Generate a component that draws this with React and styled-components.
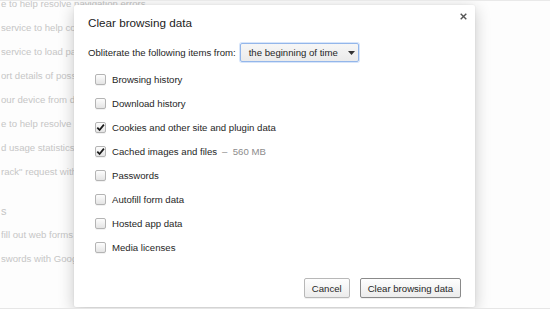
import React from "react";
import styled, { createGlobalStyle } from "styled-components";

const GlobalStyle = createGlobalStyle`
  html, body { margin: 0; padding: 0; background: #ffffff; }
  body { font-family: "Liberation Sans", Arial, Helvetica, sans-serif; }
  * { box-sizing: border-box; }
`;

const Page = styled.div`
  position: relative;
  width: 550px;
  height: 309px;
  overflow: hidden;
  background: #fdfdfd;
  border-top: 1px solid #e9e9e9;
  border-bottom: 1px solid #e6e6e6;
`;

const SettingsColumn = styled.div`
  display: flex;
  flex-direction: column;
  margin-top: -9px;
  padding-left: 1px;
  color: #c6c6c6;
  font-size: 9.6px;
  white-space: nowrap;
`;

const SettingLine = styled.div`
  width: ${(p) => p.$width || 73}px;
  height: 24px;
  line-height: 24px;
  overflow: hidden;
`;

const SectionHeading = styled.div`
  margin-top: 15px;
  height: 24px;
  line-height: 24px;
  font-size: 11px;
  color: #c4c4c4;
`;

const Dialog = styled.div`
  position: absolute;
  left: 74px;
  top: 4px;
  width: 401px;
  height: 302px;
  display: flex;
  flex-direction: column;
  background: #ffffff;
  border-radius: 2px;
  box-shadow: 0 4px 16px rgba(0, 0, 0, 0.22), 0 0 2px rgba(0, 0, 0, 0.08);
  color: #262626;
  font-size: 9.6px;
`;

const Header = styled.div`
  display: flex;
  justify-content: space-between;
  align-items: flex-start;
  padding: 10px 7px 0 14px;
`;

const Title = styled.h1`
  margin: 0;
  font-size: 11.7px;
  font-weight: normal;
  line-height: 15px;
  color: #222;
`;

const CloseButton = styled.button`
  display: flex;
  align-items: center;
  justify-content: center;
  width: 10px;
  height: 10px;
  margin-top: -4px;
  padding: 0;
  border: none;
  background: none;
  color: #555;
`;

const FromRow = styled.div`
  display: flex;
  align-items: center;
  gap: 4px;
  height: 19px;
  margin-top: 13px;
  padding-left: 14px;
`;

const Select = styled.div`
  display: flex;
  align-items: center;
  justify-content: space-between;
  width: 119px;
  height: 19px;
  padding: 0 3px 0 8px;
  border: 1px solid #93b6ea;
  border-radius: 2px;
  background: linear-gradient(#f6f6f6, #ebebeb);
  box-shadow: 0 0 0 1px rgba(140, 180, 240, 0.35);
  color: #262626;
`;

const CheckList = styled.div`
  display: flex;
  flex-direction: column;
  margin-top: 5px;
  padding-left: 21px;
`;

const CheckRow = styled.label`
  display: flex;
  align-items: center;
  gap: 6px;
  height: 24px;
`;

const Box = styled.span`
  display: flex;
  align-items: center;
  justify-content: center;
  width: 11px;
  height: 11px;
  border: 1px solid #b4b4b4;
  border-radius: 2px;
  background: linear-gradient(#fdfdfd, #e4e4e4);
  box-shadow: 0 1px 0 rgba(0, 0, 0, 0.05);
`;

const Detail = styled.span`
  margin-left: 5px;
  color: #8c8c8c;
`;

const Footer = styled.div`
  display: flex;
  justify-content: flex-end;
  gap: 10px;
  margin-top: auto;
  padding: 0 14px 9px;
`;

const Button = styled.button`
  height: 20px;
  padding: 0 7px;
  border: 1px solid ${(p) => (p.$primary ? "#8a8a8a" : "#b8b8b8")};
  border-radius: 2px;
  background: linear-gradient(#fefefe, #ececec);
  box-shadow: 0 1px 0 rgba(0, 0, 0, 0.06);
  font-family: "Liberation Sans", Arial, sans-serif;
  font-size: 9.6px;
  color: #262626;
`;

const backgroundLines = [
  "e to help resolve navigation errors",
  "service to help complete searches",
  "service to load pages more quickly",
  "ort details of possible security incidents",
  "our device from dangerous sites",
  "e to help resolve spelling errors",
  "d usage statistics and crash reports",
  "rack\" request with your browsing traffic",
];

const formLines = [
  "fill out web forms in a single click.",
  "swords with Google Smart Lock",
];

const items = [
  { label: "Browsing history", checked: false },
  { label: "Download history", checked: false },
  { label: "Cookies and other site and plugin data", checked: true },
  { label: "Cached images and files", checked: true, detail: "560 MB" },
  { label: "Passwords", checked: false },
  { label: "Autofill form data", checked: false },
  { label: "Hosted app data", checked: false },
  { label: "Media licenses", checked: false },
];

function CheckMark() {
  return (
    <svg width="9" height="9" viewBox="0 0 9 9">
      <path d="M1.3 4.6 L3.6 7 L7.9 1.6" fill="none" stroke="#1a1a1a" strokeWidth="1.8" />
    </svg>
  );
}

export default function App() {
  return (
    <>
      <GlobalStyle />
      <Page>
        <SettingsColumn>
          {backgroundLines.map((t, i) => (
            <SettingLine key={t} $width={i === 0 ? 150 : 73}>
              {t}
            </SettingLine>
          ))}
          <SectionHeading>s</SectionHeading>
          {formLines.map((t) => (
            <SettingLine key={t}>{t}</SettingLine>
          ))}
        </SettingsColumn>

        <Dialog>
          <Header>
            <Title>Clear browsing data</Title>
            <CloseButton aria-label="Close">
              <svg width="7" height="7" viewBox="0 0 7 7">
                <path d="M0.7 0.7 L6.3 6.3 M6.3 0.7 L0.7 6.3" stroke="#555" strokeWidth="1.4" />
              </svg>
            </CloseButton>
          </Header>

          <FromRow>
            <span>Obliterate the following items from:</span>
            <Select>
              <span>the beginning of time</span>
              <svg width="7" height="4" viewBox="0 0 7 4">
                <path d="M0 0 H7 L3.5 4 Z" fill="#333" />
              </svg>
            </Select>
          </FromRow>

          <CheckList>
            {items.map((it) => (
              <CheckRow key={it.label}>
                <Box>{it.checked && <CheckMark />}</Box>
                <span>
                  {it.label}
                  {it.detail && <Detail>–{"\u00a0\u00a0"}{it.detail}</Detail>}
                </span>
              </CheckRow>
            ))}
          </CheckList>

          <Footer>
            <Button>Cancel</Button>
            <Button $primary>Clear browsing data</Button>
          </Footer>
        </Dialog>
      </Page>
    </>
  );
}
